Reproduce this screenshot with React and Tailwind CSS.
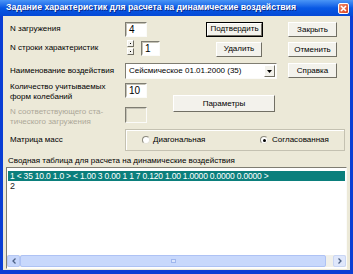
import React from 'react';

const font = { fontFamily: '"Liberation Sans", Arial, sans-serif' };

const Btn = ({ children, className = '', def = false }) => (
    <div className={`${def ? 'border border-black' : ''} ${className}`}>
        <div className="h-full w-full flex items-center justify-center border border-t-white border-l-white border-r-[#716f64] border-b-[#716f64] bg-[#f3f2ec] text-[8px] leading-none text-black whitespace-nowrap">
            {children}
        </div>
    </div>
);

const Field = ({ value, className = '', disabled = false }) => (
    <div className={`border border-t-[#7f7d72] border-l-[#7f7d72] border-r-[#fbfbf9] border-b-[#fbfbf9] ${disabled ? 'bg-[#ece9d8]' : 'bg-white'} ${className}`}>
        <div className="h-full w-full border border-t-[#c4c2b6] border-l-[#c4c2b6] border-r-transparent border-b-transparent pl-[2px] text-[10px] leading-[12px] text-black">
            {value}
        </div>
    </div>
);

const Radio = ({ checked }) => (
    <div className="w-[8px] h-[8px] rounded-full border border-t-[#8a887c] border-l-[#8a887c] border-r-[#e6e4da] border-b-[#e6e4da] bg-white flex items-center justify-center">
        {checked && <div className="w-[3px] h-[3px] rounded-full bg-black" />}
    </div>
);

export default function App() {
    return (
        <div style={font} className="w-[353px] h-[274px] bg-[#0a3ed4] flex flex-col overflow-hidden">
            {/* title bar */}
            <div className="h-[16px] flex items-center bg-gradient-to-b from-[#4a95f6] via-[#0858e4] to-[#0549d6] pl-[6px] pr-[4px]">
                <span className="text-white font-bold text-[8.7px] whitespace-nowrap [text-shadow:1px_1px_0_#0a2a8a]">
                    Задание характеристик для расчета на динамические воздействия
                </span>
                <div className="ml-auto w-[11px] h-[11px] rounded-[2px] border border-white bg-gradient-to-br from-[#f08a6a] to-[#d8401c] flex items-center justify-center">
                    <svg width="7" height="7" viewBox="0 0 7 7">
                        <path d="M1 1 L6 6 M6 1 L1 6" stroke="white" strokeWidth="1.6" />
                    </svg>
                </div>
            </div>

            {/* body */}
            <div className="mx-[3px] h-[254px] bg-[#ece9d8] flex flex-col text-[8px] text-black whitespace-nowrap">
                {/* top section */}
                <div className="flex">
                    <div className="w-[285px] flex flex-col pt-[5px]">
                        <div className="h-[16px] flex items-center">
                            <div className="w-[122px] pl-[7px]">N загружения</div>
                            <Field value="4" className="w-[22px] h-[15px] mt-[1px]" />
                            <Btn def className="ml-[59px] w-[57px] h-[15px]">Подтвердить</Btn>
                        </div>
                        <div className="mt-[3px] h-[16px] flex items-center">
                            <div className="w-[122px] pl-[7px]">N строки характеристик</div>
                            <div className="ml-[2px] w-[7px] h-[16px] flex flex-col gap-[1px]">
                                <div className="h-[7px] border border-t-white border-l-white border-r-[#716f64] border-b-[#716f64] bg-[#f3f2ec] flex items-center justify-center">
                                    <div className="w-[1px] h-[1px] bg-black" />
                                </div>
                                <div className="h-[7px] border border-t-white border-l-white border-r-[#716f64] border-b-[#716f64] bg-[#f3f2ec] flex items-center justify-center">
                                    <div className="w-[1px] h-[1px] bg-black" />
                                </div>
                            </div>
                            <Field value="1" className="ml-[7px] w-[19px] h-[15px]" />
                            <Btn className="ml-[56px] mt-[2px] w-[46px] h-[15px]">Удалить</Btn>
                        </div>
                        <div className="mt-[7px] h-[16px] flex items-center">
                            <div className="w-[122px] pl-[7px]">Наименование воздействия</div>
                            <div className="w-[152px] h-[16px] border border-t-[#7f7d72] border-l-[#7f7d72] border-r-[#fbfbf9] border-b-[#fbfbf9] bg-white flex items-center">
                                <span className="pl-[3px] text-[8px]">Сейсмическое 01.01.2000 (35)</span>
                                <div className="ml-auto mr-[1px] w-[11px] h-[12px] border border-t-white border-l-white border-r-[#716f64] border-b-[#716f64] bg-[#f3f2ec] flex items-center justify-center">
                                    <svg width="5" height="3" viewBox="0 0 5 3"><path d="M0 0 H5 L2.5 3 Z" fill="black" /></svg>
                                </div>
                            </div>
                        </div>
                    </div>
                    <div className="flex flex-col pt-[6px]">
                        <Btn className="w-[49px] h-[15px]">Закрыть</Btn>
                        <Btn className="mt-[5px] w-[49px] h-[15px]">Отменить</Btn>
                        <Btn className="mt-[6px] w-[49px] h-[15px]">Справка</Btn>
                    </div>
                </div>

                {/* rows 4-5 with Параметры */}
                <div className="flex">
                    <div className="w-[144px] flex flex-col">
                        <div className="h-[23px] flex items-start">
                            <div className="w-[122px] pl-[7px] pt-[3px] leading-[10px]">
                                Количество учитываемых<br />форм колебаний
                            </div>
                            <Field value="10" className="mt-[4px] w-[22px] h-[15px]" />
                        </div>
                        <div className="mt-[4px] h-[21px] flex items-start">
                            <div className="w-[122px] pl-[7px] pt-[1px] leading-[10px] text-[#aca899]">
                                N соответствующего ста-<br />тического загружения
                            </div>
                            <Field value="" disabled className="mt-[1px] w-[22px] h-[16px]" />
                        </div>
                    </div>
                    <Btn className="ml-[26px] mt-[16px] w-[102px] h-[17px]">Параметры</Btn>
                </div>

                {/* mass matrix */}
                <div className="mt-[2px] h-[22px] flex items-center">
                    <div className="w-[122px] pl-[7px]">Матрица масс</div>
                    <div className="w-[220px] h-[22px] border border-[#c4c1b1] shadow-[inset_1px_1px_0_#fff] flex items-center">
                        <div className="ml-[16px] w-[118px] flex items-center gap-[3px]">
                            <Radio />
                            <span>Диагональная</span>
                        </div>
                        <div className="flex items-center gap-[4px]">
                            <Radio checked />
                            <span>Согласованная</span>
                        </div>
                    </div>
                </div>

                <div className="mt-[4px] h-[12px] leading-[12px] pl-[5px]">Сводная таблица для расчета на динамические воздействия</div>

                {/* list */}
                <div className="ml-[3px] w-[341px] h-[102px] border border-t-[#7f7d72] border-l-[#7f7d72] border-r-[#fbfbf9] border-b-[#fbfbf9] bg-white flex flex-col">
                    <div className="flex-1 pt-[3px] px-[1px]">
                        <div className="h-[10px] bg-[#0b7f7c] text-white text-[8.5px] leading-[10px] pl-[2px] tracking-[-0.2px]">
                            1 &lt; 35 10.0 1.0 &gt; &lt; 1.00 3 0.00 1 1 7 0.120 1.00 1.0000 0.0000 0.0000 &gt;
                        </div>
                        <div className="h-[10px] text-[9px] leading-[10px] pl-[2px] text-[#222]">2</div>
                    </div>
                    {/* scrollbar */}
                    <div className="h-[12px] mb-[1px] flex items-stretch bg-[#f1f0ea]">
                        <div className="w-[13px] rounded-[2px] border border-[#b5c7f3] bg-[#c6d6fb] flex items-center justify-center">
                            <svg width="4" height="6" viewBox="0 0 4 6"><path d="M3.5 0.5 L1 3 L3.5 5.5" stroke="#4d6185" strokeWidth="1.3" fill="none" /></svg>
                        </div>
                        <div className="w-[306px] rounded-[2px] border border-[#aec2f4] bg-[#c8d8fc] flex items-center justify-center">
                            <div className="w-[5px] h-[4px] border border-[#9fb6ee] bg-[#dbe5fd]" />
                        </div>
                        <div className="flex-1" />
                        <div className="w-[13px] rounded-[2px] border border-[#c9d6f4] bg-[#dfe7fb] flex items-center justify-center">
                            <svg width="4" height="6" viewBox="0 0 4 6"><path d="M0.5 0.5 L3 3 L0.5 5.5" stroke="#4d6185" strokeWidth="1.3" fill="none" /></svg>
                        </div>
                    </div>
                </div>
            </div>
        </div>
    );
}
